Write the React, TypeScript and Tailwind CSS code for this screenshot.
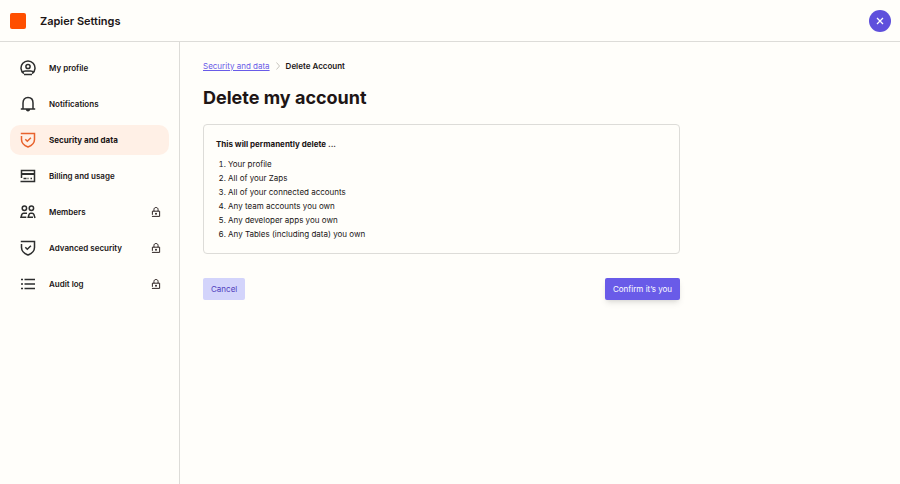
import type { ReactNode } from "react";

function Icon({ children, className = "size-4" }: { children: ReactNode; className?: string }) {
  return (
    <svg
      viewBox="0 0 16 16"
      fill="none"
      stroke="currentColor"
      strokeWidth="1.5"
      className={`${className} shrink-0`}
      aria-hidden="true"
    >
      {children}
    </svg>
  );
}

function ProfileIcon() {
  return (
    <Icon>
      <path d="M3.8 13.6A7 7 0 1 1 12.2 13.6" />
      <circle cx="8" cy="6.5" r="2.1" />
      <path d="M2 12.6C2.8 11.5 4 11 5.5 11h5c1.500 0 2.500.4 3.400 1.500M4 14.500h8" />
    </Icon>
  );
}

function BellIcon() {
  return (
    <Icon>
      <path d="M.8 13H15.2M3 13V7C3 3.7 4.8 1.5 8 1.5s5 2.2 5 5.5V13" />
      <path d="M5.8 13h4.4c0 1.6-.8 2.5-2.2 2.5s-2.2-.9-2.2-2.5z" fill="currentColor" stroke="none" />
    </Icon>
  );
}

function ShieldIcon() {
  return (
    <Icon>
      <path d="M.8 1.5H14.5V7.5c0 3.6-2.7 6-6.5 7.5-3.8-1.5-6.5-3.9-6.5-7.5V4" />
      <path d="M5.3 7.3 7.3 9.3 10.9 5.7" />
    </Icon>
  );
}

function CardIcon() {
  return (
    <Icon>
      <path d="M1.5 10V2.5h13v11H.5" />
      <path d="M1.5 6h13" strokeWidth="2" />
      <path d="M3.5 10.5h3M7.5 10.5h1M10.5 10.5h1.5" />
    </Icon>
  );
}

function MembersIcon() {
  return (
    <Icon>
      <circle cx="4.4" cy="4.3" r="2.2" />
      <circle cx="11.4" cy="4.3" r="2.2" />
      <path d="M6.3 13.3H1L1.8 10.6C2.1 9.7 2.7 9.2 3.6 9.2H7" />
      <path d="M13 13.3H8.2L9 10.6C9.2 9.7 9.7 9.2 10.6 9.2h1.5c.9 0 1.5.5 1.8 1.4l1.1 3.4" />
    </Icon>
  );
}

function ListIcon() {
  return (
    <Icon>
      <path d="M4.5 3.5h10.5M4.5 8h10.5M4.5 12.5h10.5M1 3.5h2M1 8h2M1 12.5h2" />
    </Icon>
  );
}

function LockIcon() {
  return (
    <Icon className="ml-auto size-2.5">
      <path d="M2.2 12.5V6.7h11.6v8.3H1.5M4.7 6.7V4C4.7 2 6 .8 8 .8s3.3 1.2 3.3 3.2v2.7" />
      <circle cx="8" cy="10.8" r="1.5" fill="currentColor" stroke="none" />
    </Icon>
  );
}

const navItems = [
  { label: "My profile", icon: <ProfileIcon /> },
  { label: "Notifications", icon: <BellIcon /> },
  { label: "Security and data", icon: <ShieldIcon />, active: true },
  { label: "Billing and usage", icon: <CardIcon /> },
  { label: "Members", icon: <MembersIcon />, locked: true },
  { label: "Advanced security", icon: <ShieldIcon />, locked: true },
  { label: "Audit log", icon: <ListIcon />, locked: true },
];

const deletedThings = [
  "Your profile",
  "All of your Zaps",
  "All of your connected accounts",
  "Any team accounts you own",
  "Any developer apps you own",
  "Any Tables (including data) you own",
];

export default function App() {
  return (
    <div className="flex min-h-screen flex-col bg-[#fffefa] font-[Inter,sans-serif] text-[8px] text-[#201515]">
      <header className="flex h-[42px] items-center border-b border-[#dddcd8] pr-[9px] pl-2.5">
        <span className="size-4 rounded-xs bg-[#ff4f00]" />
        <span className="ml-3.5 text-[11px] leading-5 font-semibold">Zapier Settings</span>
        <button
          type="button"
          aria-label="Close"
          className="ml-auto flex size-5.5 items-center justify-center rounded-full bg-[#5f50dc] text-white"
        >
          <Icon className="size-2">
            <path d="M2 2 14 14M14 2 2 14" strokeWidth="2.5" />
          </Icon>
        </button>
      </header>
      <div className="flex flex-1">
        <nav className="flex w-45 shrink-0 flex-col gap-1.5 border-r border-[#dddcd8] px-2.5 py-[11px]">
          {navItems.map((item) => (
            <a
              key={item.label}
              href="#"
              aria-current={item.active ? "page" : undefined}
              className={`flex h-7.5 items-center rounded-[10px] pr-2 pl-2.5 ${
                item.active ? "bg-[#fff0e6] font-bold" : "font-semibold"
              }`}
            >
              <span className={item.active ? "text-[#e8622c]" : "text-[#2d2e2e]"}>{item.icon}</span>
              <span className="ml-[13px]">{item.label}</span>
              {item.locked && <LockIcon />}
            </a>
          ))}
        </nav>
        <main className="max-w-[523px] flex-1 px-[23px] py-4.5">
          <nav className="flex items-center gap-1 leading-3" aria-label="Breadcrumb">
            <a href="#" className="text-[#695be8] underline">
              Security and data
            </a>
            <Icon className="size-2 text-[#b5b2aa]">
              <path d="M5 1 11 8 5 15" />
            </Icon>
            <span className="font-semibold">Delete Account</span>
          </nav>
          <h1 className="mt-3.5 text-[18px] leading-6 font-bold">Delete my account</h1>
          <section className="mt-3.5 rounded-sm border border-[#dddcd8] p-3">
            <h2 className="leading-3.5 font-bold">This will permanently delete ...</h2>
            <ol className="mt-1.5 list-decimal pl-3 leading-3.5">
              {deletedThings.map((thing) => (
                <li key={thing}>{thing}</li>
              ))}
            </ol>
          </section>
          <div className="mt-6 flex justify-between">
            <button type="button" className="rounded-xs bg-[#d3d4fb] px-2 py-1 leading-3.5 text-[#503ebd]">
              Cancel
            </button>
            <button
              type="button"
              className="rounded-xs bg-[#695be8] px-2 py-1 leading-3.5 text-white shadow-md"
            >
              Confirm it’s you
            </button>
          </div>
        </main>
      </div>
    </div>
  );
}
